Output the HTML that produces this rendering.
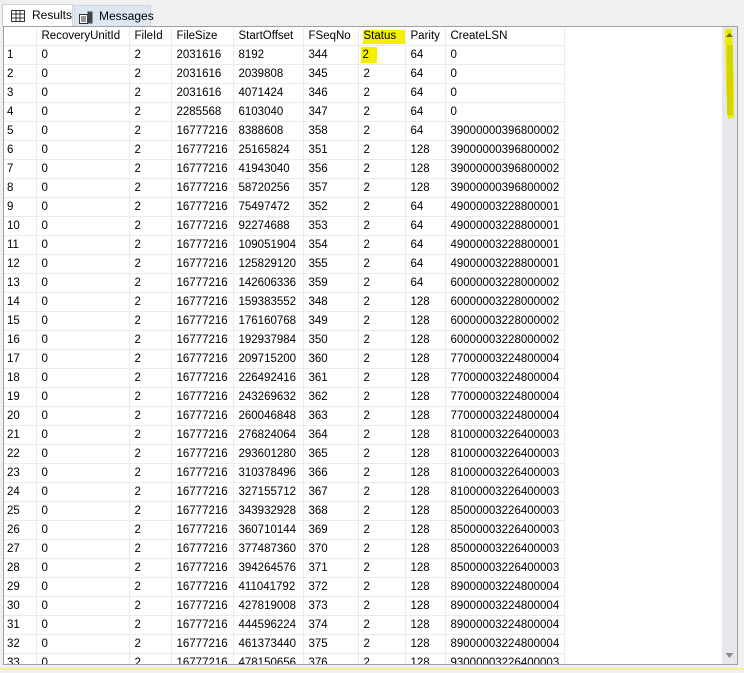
<!DOCTYPE html>
<html><head><meta charset="utf-8">
<style>
html,body{margin:0;padding:0;}
body{width:744px;height:673px;background:#f0f0f0;position:relative;overflow:hidden;font-family:"Liberation Sans",Arial,sans-serif;font-size:12px;color:#000;}
.tabs{position:absolute;left:0;top:0;width:744px;height:26px;background:#f0f0f0;}
.tab{position:absolute;top:5px;height:21px;box-sizing:border-box;font-size:12px;line-height:20px;}
.t1{left:2px;width:71px;background:#fff;border:1px solid #d0d0d0;border-bottom:none;top:4px;height:23px;}
.t2{left:74px;width:77px;background:#dce7f3;border:1px solid #c8d6e6;border-bottom:none;}
.grid{position:absolute;left:3px;top:26px;width:735px;height:639px;background:#fff;border:1px solid #a0a0a0;box-sizing:border-box;overflow:hidden;}
table{border-collapse:collapse;table-layout:fixed;position:absolute;left:0;top:0;width:560px;}
td{height:18px;border-right:1px solid #ebebeb;border-bottom:1px solid #ebebeb;padding:0 0 0 5px;white-space:nowrap;overflow:hidden;line-height:18px;font-size:11.5px;}
td:first-child{padding-left:3px;}
.sb{position:absolute;left:718px;top:0;width:15px;height:637px;background:#e8e8ec;}
.bot{position:absolute;left:0;top:668px;width:744px;height:2px;background:#f3ef9a;}
</style></head><body>
<div class="tabs">
 <div class="tab t1">
  <svg style="position:absolute;left:8px;top:5px" width="14" height="12" viewBox="0 0 14 12"><rect x="0.5" y="0.5" width="13" height="11" fill="none" stroke="#333"/><path d="M0.5 4h13M0.5 8h13M5 0.5v11M9 0.5v11" stroke="#333"/></svg>
  <span style="position:absolute;left:29px;top:0">Results</span></div>
 <div class="tab t2">
  <svg style="position:absolute;left:4px;top:5px" width="14" height="13" viewBox="0 0 14 13"><rect x="0.5" y="3.5" width="8" height="9" fill="#fff" stroke="#333"/><path d="M2 6h5M2 8h5M2 10h5" stroke="#333"/><rect x="8.5" y="0.5" width="5" height="12" fill="#444"/></svg>
  <span style="position:absolute;left:24px;top:0">Messages</span></div>
</div>
<div class="grid">
<table>
<colgroup><col style="width:32px"><col style="width:93px"><col style="width:42px"><col style="width:62px"><col style="width:70px"><col style="width:55px"><col style="width:47px"><col style="width:40px"><col style="width:119px"></colgroup>
<tr><td></td><td>RecoveryUnitId</td><td>FileId</td><td>FileSize</td><td>StartOffset</td><td>FSeqNo</td><td style="background:linear-gradient(#fff 0,#fff 3px,#f5f000 3px,#f5f000 17px,#fff 17px);background-size:42px 100%;background-repeat:no-repeat;background-position:4px 0;">Status</td><td>Parity</td><td>CreateLSN</td></tr>
<tr><td>1</td><td>0</td><td>2</td><td>2031616</td><td>8192</td><td>344</td><td><span style="background:#f5f000;padding:2px 8px 2px 2px;margin-left:-3px">2</span></td><td>64</td><td>0</td></tr>
<tr><td>2</td><td>0</td><td>2</td><td>2031616</td><td>2039808</td><td>345</td><td>2</td><td>64</td><td>0</td></tr>
<tr><td>3</td><td>0</td><td>2</td><td>2031616</td><td>4071424</td><td>346</td><td>2</td><td>64</td><td>0</td></tr>
<tr><td>4</td><td>0</td><td>2</td><td>2285568</td><td>6103040</td><td>347</td><td>2</td><td>64</td><td>0</td></tr>
<tr><td>5</td><td>0</td><td>2</td><td>16777216</td><td>8388608</td><td>358</td><td>2</td><td>64</td><td>39000000396800002</td></tr>
<tr><td>6</td><td>0</td><td>2</td><td>16777216</td><td>25165824</td><td>351</td><td>2</td><td>128</td><td>39000000396800002</td></tr>
<tr><td>7</td><td>0</td><td>2</td><td>16777216</td><td>41943040</td><td>356</td><td>2</td><td>128</td><td>39000000396800002</td></tr>
<tr><td>8</td><td>0</td><td>2</td><td>16777216</td><td>58720256</td><td>357</td><td>2</td><td>128</td><td>39000000396800002</td></tr>
<tr><td>9</td><td>0</td><td>2</td><td>16777216</td><td>75497472</td><td>352</td><td>2</td><td>64</td><td>49000003228800001</td></tr>
<tr><td>10</td><td>0</td><td>2</td><td>16777216</td><td>92274688</td><td>353</td><td>2</td><td>64</td><td>49000003228800001</td></tr>
<tr><td>11</td><td>0</td><td>2</td><td>16777216</td><td>109051904</td><td>354</td><td>2</td><td>64</td><td>49000003228800001</td></tr>
<tr><td>12</td><td>0</td><td>2</td><td>16777216</td><td>125829120</td><td>355</td><td>2</td><td>64</td><td>49000003228800001</td></tr>
<tr><td>13</td><td>0</td><td>2</td><td>16777216</td><td>142606336</td><td>359</td><td>2</td><td>64</td><td>60000003228000002</td></tr>
<tr><td>14</td><td>0</td><td>2</td><td>16777216</td><td>159383552</td><td>348</td><td>2</td><td>128</td><td>60000003228000002</td></tr>
<tr><td>15</td><td>0</td><td>2</td><td>16777216</td><td>176160768</td><td>349</td><td>2</td><td>128</td><td>60000003228000002</td></tr>
<tr><td>16</td><td>0</td><td>2</td><td>16777216</td><td>192937984</td><td>350</td><td>2</td><td>128</td><td>60000003228000002</td></tr>
<tr><td>17</td><td>0</td><td>2</td><td>16777216</td><td>209715200</td><td>360</td><td>2</td><td>128</td><td>77000003224800004</td></tr>
<tr><td>18</td><td>0</td><td>2</td><td>16777216</td><td>226492416</td><td>361</td><td>2</td><td>128</td><td>77000003224800004</td></tr>
<tr><td>19</td><td>0</td><td>2</td><td>16777216</td><td>243269632</td><td>362</td><td>2</td><td>128</td><td>77000003224800004</td></tr>
<tr><td>20</td><td>0</td><td>2</td><td>16777216</td><td>260046848</td><td>363</td><td>2</td><td>128</td><td>77000003224800004</td></tr>
<tr><td>21</td><td>0</td><td>2</td><td>16777216</td><td>276824064</td><td>364</td><td>2</td><td>128</td><td>81000003226400003</td></tr>
<tr><td>22</td><td>0</td><td>2</td><td>16777216</td><td>293601280</td><td>365</td><td>2</td><td>128</td><td>81000003226400003</td></tr>
<tr><td>23</td><td>0</td><td>2</td><td>16777216</td><td>310378496</td><td>366</td><td>2</td><td>128</td><td>81000003226400003</td></tr>
<tr><td>24</td><td>0</td><td>2</td><td>16777216</td><td>327155712</td><td>367</td><td>2</td><td>128</td><td>81000003226400003</td></tr>
<tr><td>25</td><td>0</td><td>2</td><td>16777216</td><td>343932928</td><td>368</td><td>2</td><td>128</td><td>85000003226400003</td></tr>
<tr><td>26</td><td>0</td><td>2</td><td>16777216</td><td>360710144</td><td>369</td><td>2</td><td>128</td><td>85000003226400003</td></tr>
<tr><td>27</td><td>0</td><td>2</td><td>16777216</td><td>377487360</td><td>370</td><td>2</td><td>128</td><td>85000003226400003</td></tr>
<tr><td>28</td><td>0</td><td>2</td><td>16777216</td><td>394264576</td><td>371</td><td>2</td><td>128</td><td>85000003226400003</td></tr>
<tr><td>29</td><td>0</td><td>2</td><td>16777216</td><td>411041792</td><td>372</td><td>2</td><td>128</td><td>89000003224800004</td></tr>
<tr><td>30</td><td>0</td><td>2</td><td>16777216</td><td>427819008</td><td>373</td><td>2</td><td>128</td><td>89000003224800004</td></tr>
<tr><td>31</td><td>0</td><td>2</td><td>16777216</td><td>444596224</td><td>374</td><td>2</td><td>128</td><td>89000003224800004</td></tr>
<tr><td>32</td><td>0</td><td>2</td><td>16777216</td><td>461373440</td><td>375</td><td>2</td><td>128</td><td>89000003224800004</td></tr>
<tr><td>33</td><td>0</td><td>2</td><td>16777216</td><td>478150656</td><td>376</td><td>2</td><td>128</td><td>93000003226400003</td></tr>
</table>
<div class="sb">
 <svg style="position:absolute;left:0;top:0" width="15" height="637" viewBox="0 0 15 637">
  <path d="M3 3 Q6 0 10 3 L12 60 L12 90 L6 92 L4 60 Z" fill="#eaea00"/>
  <rect x="5" y="18" width="6" height="70" fill="#d4d400"/>
  <path d="M4 10 L7.5 6 L11 10 Z" fill="#6b6b00"/>
  <path d="M3.5 626 L11.5 626 L7.5 631 Z" fill="#8a8a9a"/>
 </svg>
</div>
</div>
<div class="bot"></div>
</body></html>
